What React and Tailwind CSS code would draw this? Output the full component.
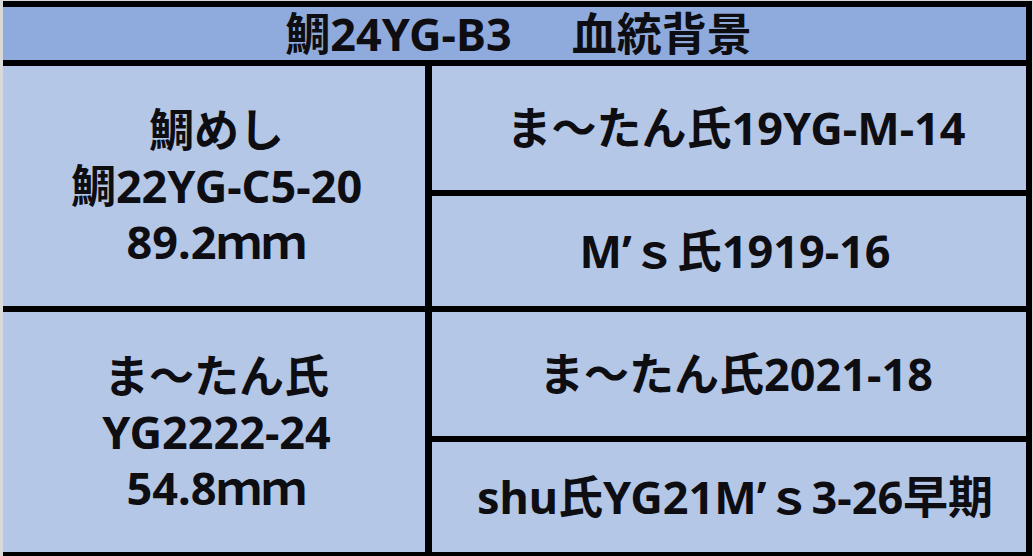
import React from 'react';

const font = { fontFamily: '"Noto Sans", "Noto Sans CJK JP", sans-serif' };

const Cell = ({ className, lines }) => (
  <div className={`bg-[#b4c7e7] flex flex-col items-center justify-center text-[45px] font-bold leading-[56px] text-[#0d0d12] ${className}`}>
    {lines.map((l, i) => (
      <div key={i} className="whitespace-pre">{l}</div>
    ))}
  </div>
);

const Row = ({ left, top, bottom }) => (
  <div className="grid grid-cols-[422px_594px] gap-x-[7px] h-[240px]">
    <Cell className="pl-[5px]" lines={left} />
    <div className="flex flex-col gap-[6px]">
      <Cell className="h-[124px] pl-[14px]" lines={[top]} />
      <Cell className="h-[110px] pl-[12px]" lines={[bottom]} />
    </div>
  </div>
);

export default function App() {
  return (
    <div className="w-[1033px] h-[556px] overflow-hidden bg-[#d9d9d9] pl-[3px] pt-[1px]" style={font}>
      <div className="w-[1029px] bg-black border-t-[6px] border-r-[6px] border-black flex flex-col gap-[6px] pb-[6px]">
        <div className="h-[53px] bg-[#8faadc] flex items-center justify-center gap-[60px] pl-[8px] text-[45px] font-bold text-[#0d0d12]">
          <span>鯛24YG-B3</span>
          <span>血統背景</span>
        </div>
        <Row
          left={['鯛めし', '鯛22YG-C5-20', '89.2ｍｍ']}
          top="ま〜たん氏19YG-M-14"
          bottom="M’ｓ氏1919-16"
        />
        <Row
          left={['ま〜たん氏', 'YG2222-24', '54.8ｍｍ']}
          top="ま〜たん氏2021-18"
          bottom="shu氏YG21M’ｓ3-26早期"
        />
      </div>
    </div>
  );
}
